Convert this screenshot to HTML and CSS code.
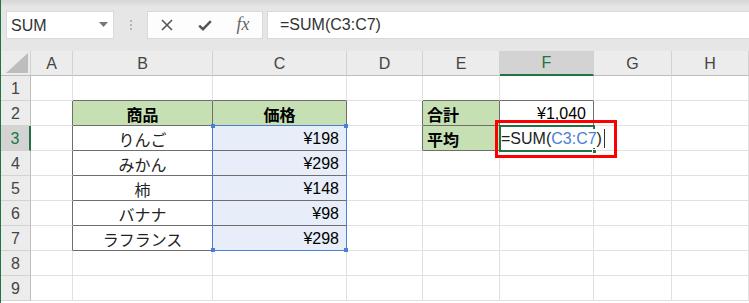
FILE: index.html
```html
<!DOCTYPE html>
<html lang="ja">
<head>
<meta charset="utf-8">
<title>SUM</title>
<link rel="stylesheet" href="styles.css">
</head>
<body>
<div class="app">
  <div class="toolbar">
    <div class="namebox"><span>SUM</span><svg class="dd" width="9" height="5" viewBox="0 0 9 5"><path d="M0 0h9L4.5 5z" fill="#777"/></svg></div>
    <div class="sep"><i></i><i></i><i></i></div>
    <div class="btns">
      <span class="btn"><svg width="12" height="12" viewBox="0 0 12 12"><path d="M1 1l10 10M11 1L1 11" stroke="#555" stroke-width="1.6"/></svg></span>
      <span class="btn"><svg width="14" height="11" viewBox="0 0 14 11"><path d="M1.2 5.6l3.8 3.6L12.8 1.2" fill="none" stroke="#555" stroke-width="2.4"/></svg></span>
      <span class="btn fx">fx</span>
    </div>
    <div class="formula">=SUM(C3:C7)</div>
  </div>
  <div class="sheet">
    <div class="c h corner"><svg width="22" height="20" viewBox="0 0 22 20"><path d="M22 0V20H0z" fill="#bdbdbd"/></svg></div>
    <div class="c h">A</div><div class="c h">B</div><div class="c h">C</div><div class="c h">D</div><div class="c h">E</div><div class="c h hs">F</div><div class="c h">G</div><div class="c h">H</div>

    <div class="c rh">1</div><div class="c"></div><div class="c bb"></div><div class="c bb"></div><div class="c"></div><div class="c bb"></div><div class="c bb"></div><div class="c"></div><div class="c"></div>

    <div class="c rh">2</div><div class="c br"></div><div class="c br bb g ctr b">商品</div><div class="c br bb g ctr b">価格</div><div class="c br"></div><div class="c br bb g b">合計</div><div class="c br bb num">¥1,040</div><div class="c"></div><div class="c"></div>

    <div class="c rh rs">3</div><div class="c br"></div><div class="c br bb ctr jp">りんご</div><div class="c br bb sel num">¥198</div><div class="c br"></div><div class="c br bb g b">平均</div><div class="c br bb edit"><span class="etext">=SUM(<span class="ref">C3:C7</span>)<i class="caret"></i></span></div><div class="c"></div><div class="c"></div>

    <div class="c rh">4</div><div class="c br"></div><div class="c br bb ctr jp">みかん</div><div class="c br bb sel num">¥298</div><div class="c"></div><div class="c"></div><div class="c"></div><div class="c"></div><div class="c"></div>

    <div class="c rh">5</div><div class="c br"></div><div class="c br bb ctr jp">柿</div><div class="c br bb sel num">¥148</div><div class="c"></div><div class="c"></div><div class="c"></div><div class="c"></div><div class="c"></div>

    <div class="c rh">6</div><div class="c br"></div><div class="c br bb ctr jp">バナナ</div><div class="c br bb sel num">¥98</div><div class="c"></div><div class="c"></div><div class="c"></div><div class="c"></div><div class="c"></div>

    <div class="c rh">7</div><div class="c br"></div><div class="c br bb ctr jp">ラフランス</div><div class="c br bb sel num">¥298</div><div class="c"></div><div class="c"></div><div class="c"></div><div class="c"></div><div class="c"></div>

    <div class="c rh">8</div><div class="c"></div><div class="c"></div><div class="c"></div><div class="c"></div><div class="c"></div><div class="c"></div><div class="c"></div><div class="c"></div>

    <div class="c rh">9</div><div class="c"></div><div class="c"></div><div class="c"></div><div class="c"></div><div class="c"></div><div class="c"></div><div class="c"></div><div class="c"></div>

    <div class="refbox"><i class="k tl"></i><i class="k tr"></i><i class="k bl"></i><i class="k br2"></i></div>
    <div class="active"><i class="handle"></i></div>
  </div>
  <div class="redbox"></div>
</div>
</body>
</html>
```

FILE: styles.css
```css
* { box-sizing: border-box; }
body {
  margin: 0;
  width: 749px;
  height: 303px;
  overflow: hidden;
  background: #fff;
  font-family: "Liberation Sans", "Noto Sans CJK JP", sans-serif;
}
.app {
  position: relative;
  height: 303px;
  border-left: 1px solid #217346;
}
.toolbar {
  height: 51px;
  display: flex;
  align-items: flex-start;
  padding: 11px 0 0 5px;
  background: linear-gradient(#d6d6d6, #e6e6e6 7px, #e6e6e6);
}
.namebox {
  width: 108px;
  height: 28px;
  background: #fff;
  border: 1px solid #d9d9d9;
  display: flex;
  align-items: center;
  justify-content: space-between;
  padding: 2px 5px 0 4px;
  font-size: 16px;
  color: #333;
}
.dd { margin-top: -3px; }
.sep {
  width: 33px;
  height: 28px;
  display: flex;
  flex-direction: column;
  align-items: center;
  justify-content: center;
  gap: 2px;
}
.sep i {
  width: 2px;
  height: 2px;
  background: #b5b5b5;
}
.btns {
  width: 116px;
  height: 28px;
  background: #fdfdfd;
  border: 1px solid #d9d9d9;
  display: flex;
  align-items: center;
}
.btn {
  width: 38px;
  height: 26px;
  display: flex;
  align-items: center;
  justify-content: center;
}
.fx {
  font-family: "Liberation Serif", serif;
  font-style: italic;
  font-size: 18px;
  color: #666;
  padding-bottom: 2px;
}
.formula {
  flex: 1;
  margin-left: 4px;
  height: 28px;
  background: #fff;
  border: 1px solid #d9d9d9;
  border-right: none;
  font-size: 16px;
  color: #333;
  padding: 4px 0 0 12px;
}
.sheet {
  position: relative;
  display: grid;
  grid-template-columns: 30px 42px 140px 134px 76px 77px 94px 78px 1fr;
  grid-template-rows: repeat(10, 25px);
}
.c {
  border-right: 1px solid #e1e1e1;
  border-bottom: 1px solid #e1e1e1;
  display: flex;
  align-items: center;
  padding: 1px 4px 0;
  font-size: 16px;
  color: #000;
  white-space: nowrap;
}
.h {
  background: #ececec;
  justify-content: center;
  color: #444;
  border-right-color: #d2d2d2;
  border-bottom-color: #bdbdbd;
}
.corner {
  align-items: flex-end;
  justify-content: flex-end;
  padding: 0 2px 2px 0;
}
.hs {
  background: #d3d3d3;
  color: #217346;
  border-bottom: 2px solid #217346;
}
.rh {
  background: #ececec;
  justify-content: center;
  color: #444;
  border-right-color: #bdbdbd;
  border-bottom-color: #d2d2d2;
}
.rs {
  background: #d3d3d3;
  color: #217346;
  border-right: 2px solid #217346;
}
.br { border-right-color: #6e6e6e; }
.bb { border-bottom-color: #6e6e6e; }
.g { background: #c6e0b4; }
.b { font-weight: bold; font-family: "Noto Sans CJK JP", sans-serif; font-size: 16px; }
.ctr { justify-content: center; }
.jp { font-family: "Noto Sans CJK JP", sans-serif; color: #222; }
.num { justify-content: flex-end; padding-right: 7px; }
.sel { background: #e7eef9; }
.edit { overflow: visible; padding-left: 1px; }
.etext {
  position: relative;
  z-index: 3;
  background: #fff;
  color: #222;
  display: flex;
  align-items: center;
  padding-right: 2px;
}
.ref { color: #4a7fd6; }
.caret {
  display: inline-block;
  width: 1px;
  height: 19px;
  background: #333;
  margin-left: 2px;
}
.refbox {
  position: absolute;
  left: 211px;
  top: 74px;
  width: 135px;
  height: 126px;
  border: 1px solid #4a7fd6;
  z-index: 2;
}
.k {
  position: absolute;
  width: 4px;
  height: 4px;
  background: #4a7fd6;
}
.tl { left: -2px; top: -2px; }
.tr { right: -2px; top: -2px; }
.bl { left: -2px; bottom: -2px; }
.br2 { right: -2px; bottom: -2px; }
.active {
  position: absolute;
  left: 498px;
  top: 74px;
  width: 96px;
  height: 27px;
  border: 2px solid #217346;
  z-index: 2;
}
.handle {
  position: absolute;
  right: -4px;
  bottom: -4px;
  width: 5px;
  height: 5px;
  background: #217346;
  border: 1px solid #fff;
}
.redbox {
  position: absolute;
  left: 494px;
  top: 120px;
  width: 122px;
  height: 38px;
  border: 3px solid #f00;
  z-index: 5;
}
```
